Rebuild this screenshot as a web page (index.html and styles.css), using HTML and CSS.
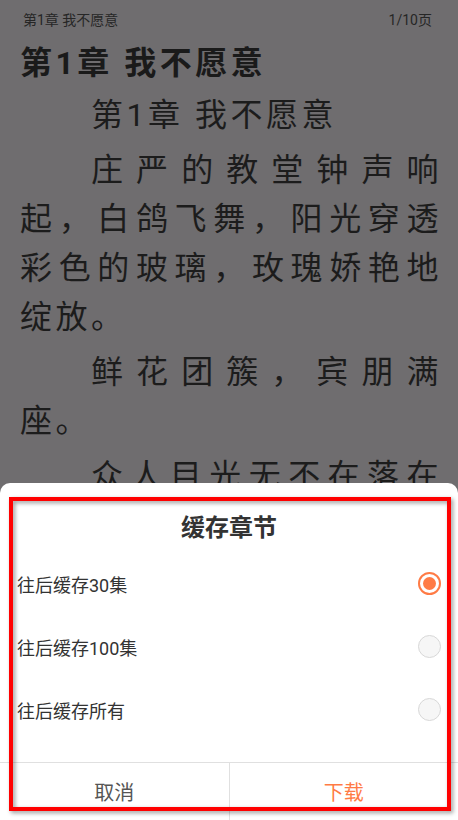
FILE: index.html
```html
<!DOCTYPE html>
<html lang="zh-CN">
<head>
<meta charset="utf-8">
<title>缓存章节</title>
<link rel="stylesheet" href="styles.css">
</head>
<body>
<div class="page">
  <div class="reader">
    <div class="topbar">
      <span>第1章 我不愿意</span>
      <span>1/10页</span>
    </div>
    <h1 class="chapter-title">第1章 我不愿意</h1>
    <p class="para">第1章 我不愿意</p>
    <p class="para">庄严的教堂钟声响起，白鸽飞舞，阳光穿透彩色的玻璃，玫瑰娇艳地绽放。</p>
    <p class="para">鲜花团簇，宾朋满座。</p>
    <p class="para para-full">众人目光无不在落在</p>
  </div>

  <div class="sheet">
    <div class="sheet-title">缓存章节</div>
    <div class="options">
      <div class="option">
        <span class="option-label">往后缓存30集</span>
        <span class="radio radio-on"></span>
      </div>
      <div class="option">
        <span class="option-label">往后缓存100集</span>
        <span class="radio"></span>
      </div>
      <div class="option">
        <span class="option-label">往后缓存所有</span>
        <span class="radio"></span>
      </div>
    </div>
    <div class="actions">
      <div class="action action-cancel">取消</div>
      <div class="action action-ok">下载</div>
    </div>
    <div class="highlight"></div>
  </div>
</div>
</body>
</html>
```

FILE: styles.css
```css
* {
  box-sizing: border-box;
}

html, body {
  margin: 0;
  padding: 0;
}

body {
  width: 458px;
  height: 820px;
  overflow: hidden;
  font-family: "Roboto", "Noto Sans CJK SC", sans-serif;
  background: #6f6d6f;
}

.page {
  position: relative;
  width: 458px;
  height: 820px;
  overflow: hidden;
}

.reader {
  height: 484px;
  overflow: hidden;
  padding: 0 16px 0 20px;
  color: #1c1c1c;
}

.topbar {
  height: 38px;
  display: flex;
  justify-content: space-between;
  align-items: center;
  padding: 0 10px 0 3px;
  font-size: 14px;
  color: #262626;
}

.chapter-title {
  margin: 0;
  padding-top: 3px;
  font-size: 32px;
  line-height: 44px;
  font-weight: bold;
  letter-spacing: 3.5px;
  color: #1a1a1a;
}

.para {
  margin: 6px 0 0 0;
  width: 422px;
  font-size: 32px;
  line-height: 49px;
  letter-spacing: 3.5px;
  text-indent: 71px;
  text-align: justify;
}

.para-full {
  text-align-last: justify;
}

.sheet {
  position: absolute;
  left: 0;
  right: 0;
  bottom: 0;
  height: 337px;
  background: #ffffff;
  border-radius: 10px 10px 0 0;
  display: flex;
  flex-direction: column;
}

.sheet-title {
  margin-top: 27px;
  height: 36px;
  line-height: 36px;
  text-align: center;
  font-size: 24px;
  font-weight: bold;
  color: #333333;
}

.options {
  margin-top: 6px;
  padding-bottom: 21px;
}

.option {
  height: 63px;
  display: flex;
  align-items: center;
  justify-content: space-between;
  padding: 0 17px 0 17px;
}

.option-label {
  font-size: 18px;
  color: #333333;
}

.radio {
  width: 23px;
  height: 23px;
  border-radius: 50%;
  border: 1px solid #d8d8d8;
  background: #f6f6f6;
  display: flex;
  align-items: center;
  justify-content: center;
}

.radio-on {
  border: 2px solid #ff7b45;
  background: #ffffff;
}

.radio-on::after {
  content: "";
  width: 13px;
  height: 13px;
  border-radius: 50%;
  background: #ff7b45;
}

.actions {
  flex: 1;
  display: flex;
  border-top: 1px solid #e0e0e0;
}

.action {
  flex: 1;
  display: flex;
  align-items: center;
  justify-content: center;
  font-size: 20px;
}

.action-cancel {
  color: #555555;
  border-right: 1px solid #e0e0e0;
}

.action-ok {
  color: #ff7b45;
}

.highlight {
  position: absolute;
  left: 9px;
  top: 14px;
  width: 442px;
  height: 314px;
  border: 4px solid #ff0000;
  filter: drop-shadow(2px 2px 2px rgba(0, 0, 0, 0.4));
  pointer-events: none;
}
```
